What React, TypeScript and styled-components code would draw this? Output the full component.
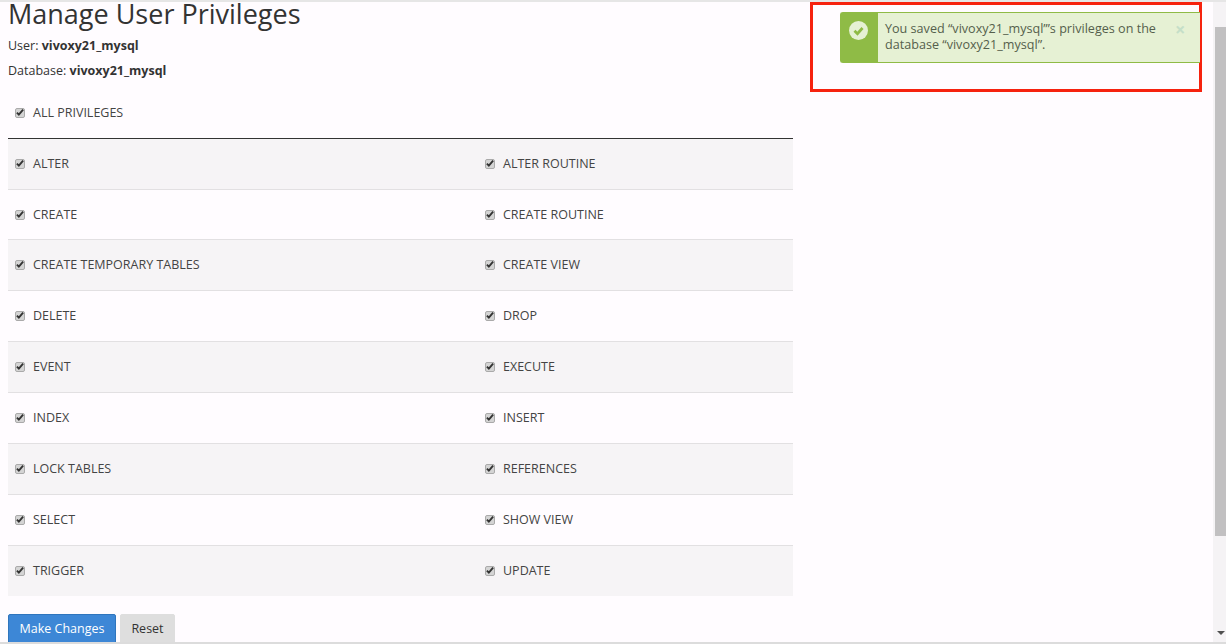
import React from "react";
import styled, { createGlobalStyle } from "styled-components";

const rows: [string, string][] = [
  ["ALTER", "ALTER ROUTINE"],
  ["CREATE", "CREATE ROUTINE"],
  ["CREATE TEMPORARY TABLES", "CREATE VIEW"],
  ["DELETE", "DROP"],
  ["EVENT", "EXECUTE"],
  ["INDEX", "INSERT"],
  ["LOCK TABLES", "REFERENCES"],
  ["SELECT", "SHOW VIEW"],
  ["TRIGGER", "UPDATE"],
];

const Check = ({ label }: { label: string }) => (
  <CheckLabel>
    <CheckBox>
      <svg width="9" height="9" viewBox="0 0 9 9">
        <path d="M1 4.6 L3.2 6.8 L8 1.4" fill="none" stroke="#333" strokeWidth="2.1" />
      </svg>
    </CheckBox>
    {label}
  </CheckLabel>
);

const App = () => {
  return (
    <Page>
      <GlobalStyle />
      <Main>
        <Title>Manage User Privileges</Title>
        <Info>
          User: <b>vivoxy21_mysql</b>
        </Info>
        <Info>
          Database: <b>vivoxy21_mysql</b>
        </Info>
        <AllRow>
          <Check label="ALL PRIVILEGES" />
        </AllRow>
        <Table>
          {rows.map(([a, b], i) => (
            <Row key={a} $odd={i % 2 === 0}>
              <Check label={a} />
              <Check label={b} />
            </Row>
          ))}
        </Table>
        <Actions>
          <PrimaryButton>Make Changes</PrimaryButton>
          <ResetButton>Reset</ResetButton>
        </Actions>
      </Main>
      <Highlight>
        <Alert>
          <AlertIcon>
            <svg width="19" height="19" viewBox="0 0 18 18">
              <circle cx="9" cy="9" r="9" fill="#e6f1d4" />
              <path d="M5.2 9.2 L8 12 L12.8 6.6" fill="none" stroke="#8fbb46" strokeWidth="2.6" />
            </svg>
          </AlertIcon>
          <AlertText>You saved “vivoxy21_mysql”’s privileges on the database “vivoxy21_mysql”.</AlertText>
          <Close>×</Close>
        </Alert>
      </Highlight>
      <Scrollbar>
        <ArrowUp />
        <Thumb />
        <ArrowDown />
      </Scrollbar>
    </Page>
  );
};

const GlobalStyle = createGlobalStyle`
  html, body {
    margin: 0;
    height: 100%;
    overflow: hidden;
    background: #fffcff;
  }
  * {
    box-sizing: border-box;
  }
`;

const Page = styled.div`
  width: 1226px;
  height: 644px;
  overflow: hidden;
  display: flex;
  align-items: flex-start;
  border-top: 2px solid #e6e6e6;
  border-bottom: 2px solid #dcdcdc;
  font-family: "Open Sans", sans-serif;
  font-size: 12.5px;
  color: #333;
`;

const Main = styled.div`
  width: 785px;
  margin-left: 8px;
  flex-shrink: 0;
`;

const Title = styled.h1`
  margin: 0;
  font-size: 27px;
  font-weight: 400;
  line-height: 24px;
  color: #333;
`;

const Info = styled.p`
  margin: 0 0 7px;
  line-height: 18px;
  &:first-of-type {
    margin-top: 11px;
  }
  & b {
    font-weight: 700;
  }
`;

const AllRow = styled.div`
  display: flex;
  align-items: center;
  height: 52px;
  padding-left: 7px;
  border-bottom: 1px solid #333;
`;

const Table = styled.div`
  display: flex;
  flex-direction: column;
`;

const Row = styled.div<{ $odd: boolean }>`
  display: grid;
  grid-template-columns: 470px 1fr;
  align-items: center;
  height: 51px;
  padding: 0 0 1px 7px;
  background: ${(p) => (p.$odd ? "#f6f4f6" : "#fffcff")};
  border-bottom: 1px solid #e2e0e2;
  &:nth-child(2) {
    height: 50px;
    padding-bottom: 0;
  }
  &:last-child {
    height: 50px;
    border-bottom: none;
  }
`;

const CheckLabel = styled.label`
  display: flex;
  align-items: center;
  gap: 8px;
  font-size: 12.5px;
  color: #444;
`;

const CheckBox = styled.span`
  width: 10px;
  height: 10px;
  flex-shrink: 0;
  display: flex;
  align-items: center;
  justify-content: center;
  background: #d4d4d4;
  border: 1px solid #aaa;
  border-radius: 2px;
`;

const Actions = styled.div`
  display: flex;
  gap: 4px;
  margin-top: 18px;
`;

const PrimaryButton = styled.button`
  height: 30px;
  width: 108px;
  padding: 0 0 2px;
  border: 1px solid #2f75bd;
  border-radius: 2px 2px 0 0;
  background: #3d87d6;
  color: #fff;
  font-family: inherit;
  font-size: 12.5px;
`;

const ResetButton = styled.button`
  height: 30px;
  width: 55px;
  padding: 0 0 2px;
  border: 1px solid #dedede;
  border-radius: 2px 2px 0 0;
  background: #dedede;
  color: #333;
  font-family: inherit;
  font-size: 12.5px;
`;

const Highlight = styled.div`
  width: 392px;
  height: 90px;
  margin-left: 17px;
  flex-shrink: 0;
  padding: 7px 0 0 27px;
  border: 3px solid #f6220e;
`;

const Alert = styled.div`
  display: flex;
  width: 360px;
  height: 51px;
  background: #e6f1d4;
  border: 1px solid #8fbb46;
  border-right: none;
  border-radius: 3px 0 0 3px;
`;

const AlertIcon = styled.div`
  width: 37px;
  flex-shrink: 0;
  display: flex;
  justify-content: center;
  padding: 8px 3px 0 0;
  background: #8fbb46;
`;

const AlertText = styled.div`
  flex: 1;
  padding: 8px 0 0 7px;
  font-size: 12.6px;
  line-height: 16px;
  color: #555f4c;
`;

const Close = styled.span`
  width: 35px;
  padding: 6px 0 0 10px;
  font-size: 18px;
  font-weight: 700;
  line-height: 20px;
  color: #c5dfc8;
  flex-shrink: 0;
`;

const Scrollbar = styled.div`
  width: 13px;
  margin-left: 11px;
  margin-top: -2px;
  height: 644px;
  flex-shrink: 0;
  display: flex;
  flex-direction: column;
  background: #f5f3f5;
`;

const Thumb = styled.div`
  width: 11px;
  height: 509px;
  margin-left: 2px;
  background: #c1c0c1;
`;

const ArrowUp = styled.div`
  height: 27px;
`;

const ArrowDown = styled.div`
  width: 0;
  height: 0;
  margin: 95px 0 0 4px;
  border-left: 4px solid transparent;
  border-right: 4px solid transparent;
  border-top: 4px solid #505050;
`;

export default App;
